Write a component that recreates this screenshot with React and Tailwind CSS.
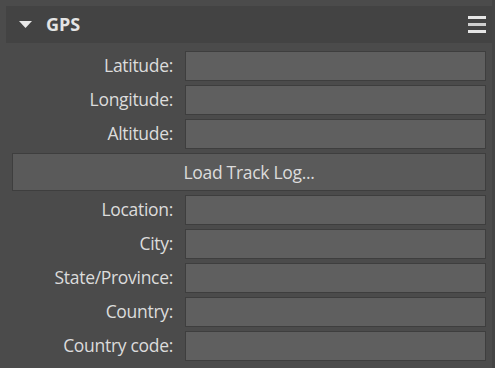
import React from 'react';

const fields1 = ['Latitude:', 'Longitude:', 'Altitude:'];
const fields2 = ['Location:', 'City:', 'State/Province:', 'Country:', 'Country code:'];

const Row = ({ label }) => (
  <div className="flex items-center h-[30px]">
    <div className="w-[167px] shrink-0 text-right text-[17.5px] text-[#dcdcdc] leading-none tracking-[-0.3px]">{label}</div>
    <div className="ml-[12px] w-[301px] h-[30px] bg-[#5f5f5f] border border-[#3e3e3e]" />
  </div>
);

export default function App() {
  return (
    <div
      className="w-[495px] h-[368px] bg-[#4b4b4b] flex overflow-hidden"
      style={{ fontFamily: '"Open Sans", "Noto Sans", sans-serif' }}
    >
      <div className="flex-1 flex flex-col pt-[6px] pl-[6px]">
        {/* Header */}
        <div className="h-[37px] bg-[#434343] flex items-center pl-[13px] pr-[3px]">
          <svg width="13" height="7" viewBox="0 0 13 7" className="shrink-0">
            <polygon points="0,0 13,0 6.5,7" fill="#e8e8e8" />
          </svg>
          <span className="ml-[14px] text-[18px] font-bold text-[#e4e4e4]">GPS</span>
          <div className="ml-auto flex flex-col gap-[4px] w-[18px] mr-[3px]">
            <div className="h-[3px] bg-[#e6e6e6]" />
            <div className="h-[3px] bg-[#cfcfcf]" />
            <div className="h-[3px] bg-[#e6e6e6]" />
          </div>
        </div>

        {/* Fields */}
        <div className="flex flex-col gap-[4px] pt-[8px]">
          {fields1.map(f => <Row key={f} label={f} />)}
          <div className="ml-[6px] w-[474px] h-[38px] bg-[#5a5a5a] border border-[#3e3e3e] flex items-center justify-center text-[17.5px] text-[#dcdcdc] tracking-[-0.3px]">
            Load Track Log...
          </div>
          {fields2.map(f => <Row key={f} label={f} />)}
        </div>
      </div>
      <div className="w-[3px] bg-[#444444]" />
    </div>
  );
}
